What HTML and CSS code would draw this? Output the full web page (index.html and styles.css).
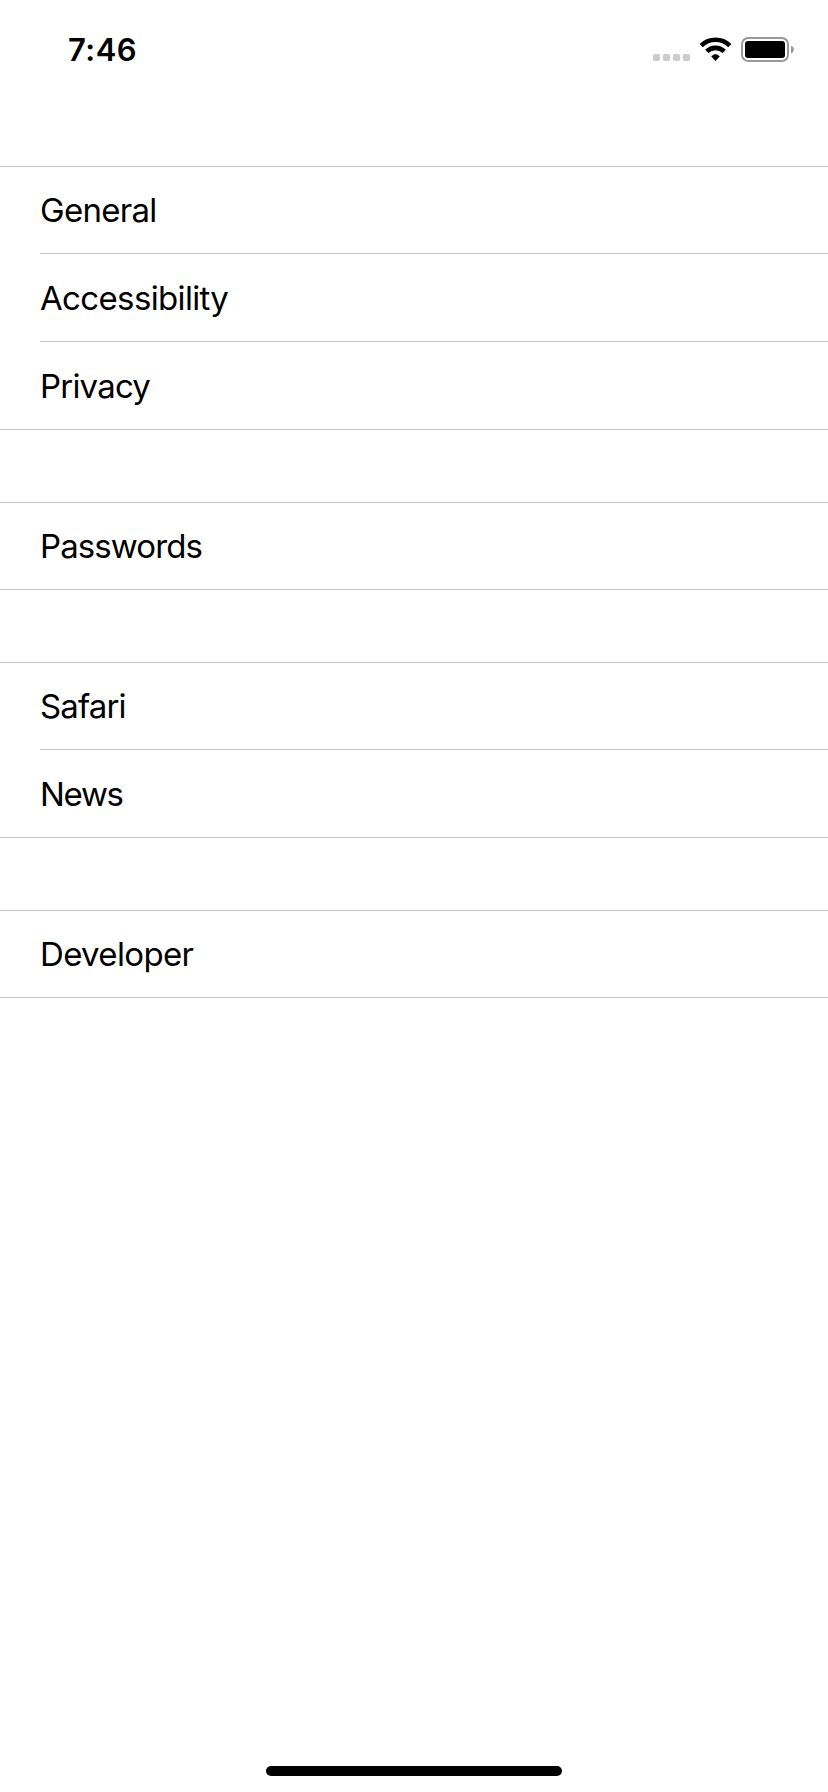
FILE: index.html
```html
<!DOCTYPE html>
<html lang="en">
<head>
<meta charset="utf-8">
<title>Settings</title>
<link rel="stylesheet" href="styles.css">
</head>
<body>
<div class="screen">
  <header class="status-bar">
    <span class="time">7:46</span>
    <svg class="status-icons" width="142" height="26" viewBox="0 0 142 26">
      <g fill="#cbcbcb">
        <rect x="0" y="17" width="7" height="7" rx="1.8"/>
        <rect x="10" y="17" width="7" height="7" rx="1.8"/>
        <rect x="20" y="17" width="7" height="7" rx="1.8"/>
        <rect x="30" y="17" width="7" height="7" rx="1.8"/>
      </g>
      <g fill="none" stroke="#000" stroke-width="4.6">
        <path d="M48.2 8.6A20.5 20.5 0 0 1 76.8 8.6"/>
        <path d="M53.8 14.4A12.4 12.4 0 0 1 71.2 14.4"/>
      </g>
      <path d="M58.6 19.4Q62.5 15.4 66.4 19.4L62.5 23.8Z" fill="#000" stroke="#000" stroke-width=".6" stroke-linejoin="round"/>
      <rect x="89" y="1" width="46" height="23" rx="6.2" fill="none" stroke="#999" stroke-width="2"/>
      <rect x="92" y="4" width="40" height="17" rx="3" fill="#000"/>
      <path d="M138 8.5Q141 10 141 12.5T138 16.5Z" fill="#999"/>
    </svg>
  </header>
  <main class="groups">
    <ul class="group">
      <li class="row general">General</li>
      <li class="row accessibility">Accessibility</li>
      <li class="row privacy">Privacy</li>
    </ul>
    <ul class="group">
      <li class="row passwords">Passwords</li>
    </ul>
    <ul class="group">
      <li class="row safari">Safari</li>
      <li class="row news">News</li>
    </ul>
    <ul class="group">
      <li class="row developer">Developer</li>
    </ul>
  </main>
  <div class="home-indicator"></div>
</div>
</body>
</html>
```
FILE: styles.css
```css
* { box-sizing: border-box; }

body {
  margin: 0;
  background: #fff;
  color: #000;
  font-family: Inter, "Liberation Sans", sans-serif;
}

.screen {
  display: flex;
  flex-direction: column;
  height: 1792px;
  overflow: hidden;
}

.status-bar {
  display: flex;
  justify-content: space-between;
  align-items: flex-start;
  height: 166px;
  padding: 37px 33px 0 68px;
}

.time {
  font-size: 31px;
  font-weight: 600;
  line-height: 26px;
  letter-spacing: 0.5px;
}

.groups {
  display: flex;
  flex-direction: column;
  gap: 72px;
}

.group {
  margin: 0;
  padding: 0 0 0 40px;
  list-style: none;
  border-top: 1px solid #c6c6c6;
  border-bottom: 1px solid #c6c6c6;
}

.row {
  height: 86px;
  font-size: 33px;
  line-height: 86px;
  white-space: nowrap;
}

.row + .row {
  height: 88px;
  border-top: 1px solid #c6c6c6;
  line-height: 88px;
}

/* Optical tracking per label */
.general { letter-spacing: -0.7px; }
.accessibility { letter-spacing: -0.65px; }
.privacy { letter-spacing: -0.8px; }
.passwords { letter-spacing: -0.9px; }
.safari { letter-spacing: -0.85px; }
.news { letter-spacing: -1.3px; }
.developer { letter-spacing: -0.65px; }

.home-indicator {
  width: 296px;
  height: 10px;
  margin: auto auto 16px;
  border-radius: 5px;
  background: #000;
}
```
